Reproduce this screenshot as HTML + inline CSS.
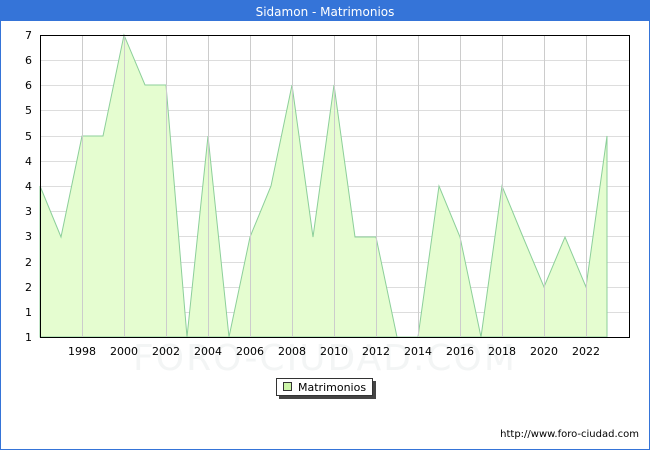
<!DOCTYPE html>
<html><head><meta charset="utf-8"><style>
html,body{margin:0;padding:0;background:#fff;}
body{width:650px;height:450px;overflow:hidden;}
</style></head><body>
<svg width="650" height="450" viewBox="0 0 650 450" xmlns="http://www.w3.org/2000/svg" font-family="'DejaVu Sans','Liberation Sans',sans-serif">
<rect x="0.5" y="0.5" width="649" height="449" fill="#fff" stroke="#3574d8"/>
<rect x="0" y="0" width="650" height="21" fill="#3574d8"/>
<text x="325" y="16" text-anchor="middle" font-size="12" fill="#fff">Sidamon - Matrimonios</text>
<g stroke="#ddd" stroke-width="1">
<line x1="40" y1="60.5" x2="630" y2="60.5"/><line x1="40" y1="85.5" x2="630" y2="85.5"/><line x1="40" y1="110.5" x2="630" y2="110.5"/><line x1="40" y1="136.5" x2="630" y2="136.5"/><line x1="40" y1="161.5" x2="630" y2="161.5"/><line x1="40" y1="186.5" x2="630" y2="186.5"/><line x1="40" y1="211.5" x2="630" y2="211.5"/><line x1="40" y1="236.5" x2="630" y2="236.5"/><line x1="40" y1="262.5" x2="630" y2="262.5"/><line x1="40" y1="287.5" x2="630" y2="287.5"/><line x1="40" y1="312.5" x2="630" y2="312.5"/>
</g>
<polygon fill="#e5fdd0" stroke="#8ccf9a" stroke-width="1" points="40,337 40,186 61,237 82,136 103,136 124,35 145,85 166,85 187,337 208,136 229,337 250,237 271,186 292,85 313,237 334,85 355,237 376,237 397,337 418,337 439,186 460,237 481,337 502,186 523,237 544,287 565,237 586,287 607,136 607,337"/>
<g stroke="#ccc" stroke-width="1">
<line x1="82.5" y1="35" x2="82.5" y2="337"/><line x1="124.5" y1="35" x2="124.5" y2="337"/><line x1="166.5" y1="35" x2="166.5" y2="337"/><line x1="208.5" y1="35" x2="208.5" y2="337"/><line x1="250.5" y1="35" x2="250.5" y2="337"/><line x1="292.5" y1="35" x2="292.5" y2="337"/><line x1="334.5" y1="35" x2="334.5" y2="337"/><line x1="376.5" y1="35" x2="376.5" y2="337"/><line x1="418.5" y1="35" x2="418.5" y2="337"/><line x1="460.5" y1="35" x2="460.5" y2="337"/><line x1="502.5" y1="35" x2="502.5" y2="337"/><line x1="544.5" y1="35" x2="544.5" y2="337"/><line x1="586.5" y1="35" x2="586.5" y2="337"/>
</g>
<text x="325" y="370" text-anchor="middle" font-size="36" fill="#f3f5f5" letter-spacing="2">FORO-CIUDAD.COM</text>
<rect x="40.5" y="35.5" width="589" height="302" fill="none" stroke="#000"/>
<g font-size="11" fill="#000" text-anchor="end">
<text x="32" y="39">7</text><text x="32" y="64">6</text><text x="32" y="89">6</text><text x="32" y="114">5</text><text x="32" y="140">5</text><text x="32" y="165">4</text><text x="32" y="190">4</text><text x="32" y="215">3</text><text x="32" y="240">3</text><text x="32" y="266">2</text><text x="32" y="291">2</text><text x="32" y="316">1</text><text x="32" y="341">1</text>
</g>
<g font-size="11" fill="#000" text-anchor="middle">
<text x="82" y="355">1998</text><text x="124" y="355">2000</text><text x="166" y="355">2002</text><text x="208" y="355">2004</text><text x="250" y="355">2006</text><text x="292" y="355">2008</text><text x="334" y="355">2010</text><text x="376" y="355">2012</text><text x="418" y="355">2014</text><text x="460" y="355">2016</text><text x="502" y="355">2018</text><text x="544" y="355">2020</text><text x="586" y="355">2022</text>
</g>
<rect x="279" y="381" width="97" height="18" fill="#444"/>
<rect x="276.5" y="378.5" width="96" height="17" fill="#fff" stroke="#333"/>
<rect x="283.5" y="382.5" width="8" height="8" fill="#ccf5a8" stroke="#333"/>
<text x="298" y="391" font-size="11" fill="#000">Matrimonios</text>
<text x="639" y="437" text-anchor="end" font-size="10" fill="#000">http://www.foro-ciudad.com</text>
</svg>
</body></html>
